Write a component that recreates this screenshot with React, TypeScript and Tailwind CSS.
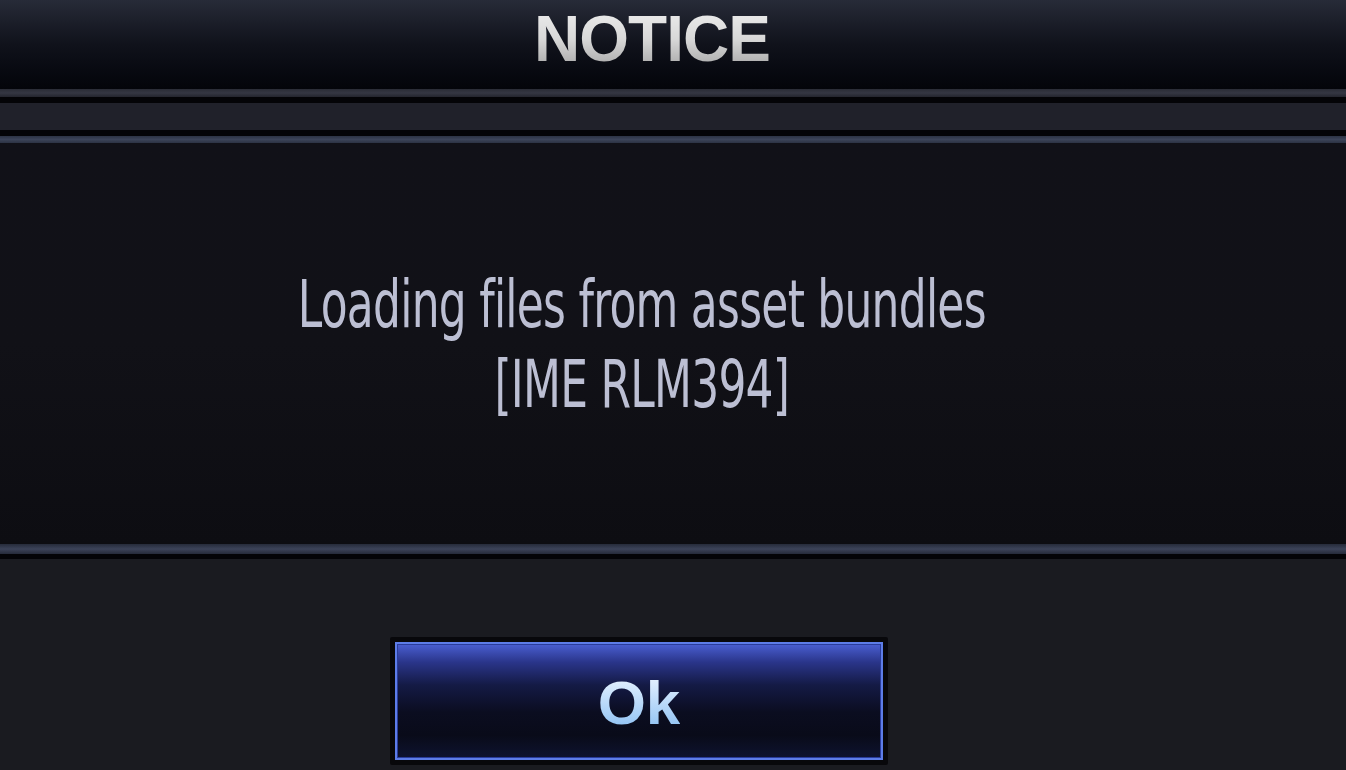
export default function App() {
  return (
    <div className="w-[1346px] h-[770px] flex flex-col overflow-hidden bg-[#111117]">
      {/* Header */}
      <div className="h-[89px] shrink-0 flex justify-center items-start pr-[42px] bg-gradient-to-b from-[#272b38] via-[#10121b] to-[#04050a]">
        <span
          className="mt-[1px] text-[64px] leading-[76px] font-bold tracking-[-1px] bg-gradient-to-b from-[#f2f2f2] via-[#d8d8d8] to-[#9a9a9a] bg-clip-text text-transparent"
          style={{ fontFamily: '"Liberation Sans", Arial, sans-serif' }}
        >
          NOTICE
        </span>
      </div>
      <div className="h-[8px] shrink-0 bg-gradient-to-b from-[#2a2c36] via-[#353743] to-[#24252e]" />
      <div className="h-[6px] shrink-0 bg-[#040407]" />
      <div className="h-[27px] shrink-0 bg-[#20212a]" />
      <div className="h-[6px] shrink-0 bg-[#040407]" />
      <div className="h-[7px] shrink-0 bg-gradient-to-b from-[#2c3344] via-[#3c4459] to-[#2c3344]" />
      {/* Body */}
      <div className="h-[401px] shrink-0 flex flex-col items-center justify-center pr-[62px] bg-gradient-to-b from-[#111118] via-[#111117] to-[#0d0d12]">
        <div
          className="text-[#bcbfd3] text-[66px] leading-[80px] text-center tracking-[-1px] pt-[2px] scale-x-[0.74]"
          style={{ fontFamily: '"Liberation Sans Narrow", "DejaVu Sans Condensed", sans-serif' }}
        >
          <div>Loading files from asset bundles</div>
          <div>[IME RLM394]</div>
        </div>
      </div>
      <div className="h-[10px] shrink-0 bg-gradient-to-b from-[#262b3a] via-[#3c4359] to-[#262b3a]" />
      <div className="h-[5px] shrink-0 bg-[#040407]" />
      {/* Footer */}
      <div className="flex-1 flex justify-center items-start pt-[78px] pr-[68px] bg-[#1a1b20]">
        <div className="w-[498px] h-[128px] p-[5px] bg-[#08080b] rounded-[2px]">
          <div className="w-full h-full border-2 border-[#5d7de8] flex items-center justify-center bg-[linear-gradient(to_bottom,#4a5fd2_0%,#2a358a_16%,#141a45_36%,#0b0d20_60%,#090b19_80%,#0e1330_100%)] shadow-[inset_0_0_0_1px_#2a3c9a]">
            <span
              className="mt-[4px] text-[62px] leading-none font-bold bg-gradient-to-b from-[#eef6ff] to-[#86bdf2] bg-clip-text text-transparent"
              style={{ fontFamily: '"Liberation Sans", Arial, sans-serif' }}
            >
              Ok
            </span>
          </div>
        </div>
      </div>
    </div>
  );
}
